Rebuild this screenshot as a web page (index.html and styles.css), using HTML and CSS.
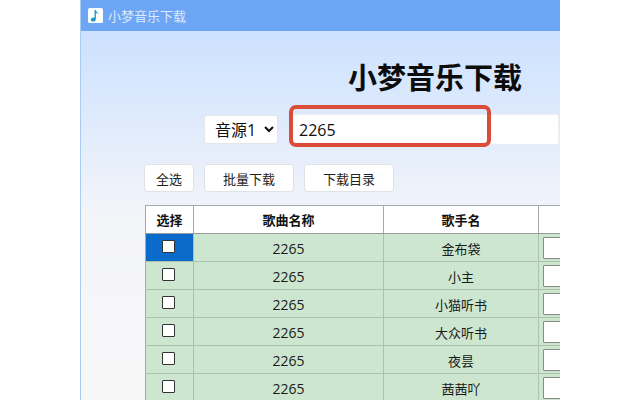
FILE: index.html
```html
<!DOCTYPE html>
<html lang="zh">
<head>
<meta charset="utf-8">
<title>小梦音乐下载</title>
<link rel="stylesheet" href="styles.css">
</head>
<body>
<div class="window">
  <header class="titlebar">
    <svg class="app-icon" viewBox="0 0 16 16" width="15" height="15">
      <rect width="16" height="16" rx="2" fill="#fff"/>
      <path d="M7 2h1.4c.3 2.2 2.2 3 3.8 4.8-1.1-.8-2.6-1.3-3.8-1.5v6.6c0 1.6-1.4 2.6-3 2.6-1.4 0-2.4-.7-2.4-1.9 0-1.4 1.4-2.4 2.8-2.4.6 0 1 .1 1.2.3z" fill="#149cc6"/>
    </svg>
    <span class="titlebar-text">小梦音乐下载</span>
  </header>
  <main class="content">
    <h1 class="heading">小梦音乐下载</h1>
    <div class="search-row">
      <select class="source"><option>音源1</option></select>
      <div class="search-wrap">
        <input class="search" type="text" value="2265">
        <div class="highlight"></div>
      </div>
    </div>
    <div class="actions">
      <button class="btn btn-small">全选</button>
      <button class="btn">批量下载</button>
      <button class="btn">下载目录</button>
    </div>
    <table class="songs">
      <colgroup><col class="c1"><col class="c2"><col class="c3"><col class="c4"></colgroup>
      <thead><tr><th>选择</th><th>歌曲名称</th><th>歌手名</th><th></th></tr></thead>
      <tbody>
        <tr><td class="pick active"><span class="check"></span></td><td>2265</td><td class="artist">金布袋</td><td class="cell-input"><span class="path"></span></td></tr>
        <tr><td class="pick"><span class="check"></span></td><td>2265</td><td class="artist">小主</td><td class="cell-input"><span class="path"></span></td></tr>
        <tr><td class="pick"><span class="check"></span></td><td>2265</td><td class="artist">小猫听书</td><td class="cell-input"><span class="path"></span></td></tr>
        <tr><td class="pick"><span class="check"></span></td><td>2265</td><td class="artist">大众听书</td><td class="cell-input"><span class="path"></span></td></tr>
        <tr><td class="pick"><span class="check"></span></td><td>2265</td><td class="artist">夜昙</td><td class="cell-input"><span class="path"></span></td></tr>
        <tr><td class="pick"><span class="check"></span></td><td>2265</td><td class="artist">茜茜吖</td><td class="cell-input"><span class="path"></span></td></tr>
      </tbody>
    </table>
  </main>
</div>
</body>
</html>
```
FILE: styles.css
```css
* { box-sizing: border-box; }
html, body { margin: 0; height: 100%; background: #fff; overflow: hidden; }
body { font-family: "Open Sans", "Noto Sans CJK SC", sans-serif; color: #111; }
.window {
  width: 480px; height: 400px; margin-left: 80px; overflow: hidden;
  display: flex; flex-direction: column;
  border-left: 1px solid #a9cdf2;
  background: linear-gradient(180deg, #cce1ff 30px, #f4f5f9 220px, #f7f7f8 400px);
}
.titlebar {
  flex: none; height: 31px; display: flex; align-items: center; gap: 5px; padding-left: 8px;
  background: #6ea6f6; margin-left: -1px;
}
.app-icon { flex: none; }
.titlebar-text { font-size: 13px; color: #dde9fd; font-family: "Noto Sans CJK SC", sans-serif; }
.content { width: 580px; padding-left: 64px; flex: none; }
.heading {
  margin: 0; width: 580px; height: 83px; padding-top: 26px; text-align: center;
  font-size: 29px; line-height: 38px; font-weight: 700; color: #0c0c0c;
  font-family: "Noto Sans CJK SC", sans-serif;
}
.search-row { display: flex; align-items: center; margin-left: 59px; height: 31px; gap: 13px; }
.source {
  width: 74px; height: 29px; border: 1px solid #e3e5e8; border-radius: 3px; background: #fff;
  font: 16px "Open Sans", "Noto Sans CJK SC", sans-serif; color: #111; padding-left: 6px;
}
.search-wrap { position: relative; flex: none; }
.search {
  display: block; width: 268px; height: 31px; border: 1px solid #eceef2; border-radius: 2px;
  background: #fff; padding: 0 7px; font: 16px "Open Sans", sans-serif; color: #111; outline: none;
}
.highlight {
  position: absolute; left: -2px; top: -9px; width: 202px; height: 42px;
  border: 4px solid #dc4a38; border-radius: 7px;
}
.actions { display: flex; gap: 10px; margin-top: 19px; margin-left: -1px; height: 28px; }
.btn {
  width: 90px; height: 28px; padding: 0; border: 1px solid #dfe2e7; border-radius: 3px; background: #fff;
  font: 13px "Noto Sans CJK SC", sans-serif; color: #222;
}
.btn-small { width: 50px; }
.songs {
  margin-top: 13px; width: 580px; table-layout: fixed; border-collapse: collapse;
  border-top: 1px solid #a8a8a8; border-left: 1px solid #a8a8a8;
  font-size: 14px;
}
.c1 { width: 48px; } .c2 { width: 190px; } .c3 { width: 155px; }
.songs th {
  height: 28px; padding: 0; background: #fff; font: 700 13px "Noto Sans CJK SC", sans-serif;
  color: #111; border-right: 1px solid #a8a8a8; border-bottom: 1px solid #999;
}
.songs td {
  height: 28px; padding: 1px 0 0; background: #cde6cf; text-align: center; color: #1a1a1a;
  border-right: 1px solid #adc2ae; border-bottom: 1px solid #adc2ae;
  font-family: "Open Sans", "Noto Sans CJK SC", sans-serif;
}
.songs td.artist { font-size: 13px; font-family: "Noto Sans CJK SC", sans-serif; }
.songs td.active { background: #0a6bcb; }
.songs td.pick { vertical-align: top; padding: 6px 2px 0 0; }
.check { display: block; margin: 0 auto; width: 13px; height: 13px; border: 1px solid #333; border-radius: 1px; background: #fff; }
.songs td.cell-input { text-align: left; padding: 0 0 0 4px; }
.path { display: block; width: 100%; height: 22px; background: #fff; border: 1px solid #8a8a8a; border-radius: 1px; }
```
